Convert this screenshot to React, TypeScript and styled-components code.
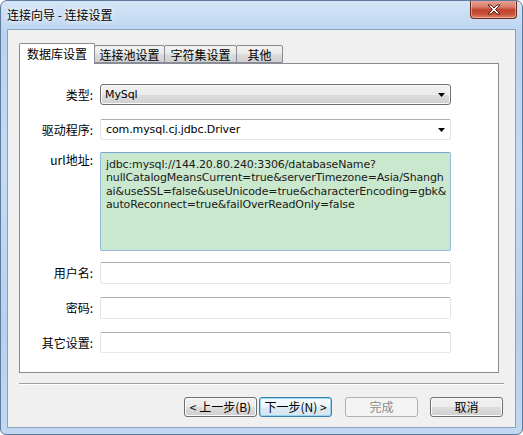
import styled, { createGlobalStyle } from 'styled-components';

const GlobalStyle = createGlobalStyle`
	html, body {
		margin: 0;
		padding: 0;
		background: #ffffff;
	}
	body {
		font-family: "Noto Sans CJK SC", "DejaVu Sans", sans-serif;
		font-size: 12px;
		color: #000;
	}
`

const CJK = `"Noto Sans CJK SC", "DejaVu Sans", sans-serif`
const LATIN = `"DejaVu Sans", "Noto Sans CJK SC", sans-serif`

const urlLines = [
	'jdbc:mysql://144.20.80.240:3306/databaseName?',
	'nullCatalogMeansCurrent=true&serverTimezone=Asia/Shangh',
	'ai&useSSL=false&useUnicode=true&characterEncoding=gbk&',
	'autoReconnect=true&failOverReadOnly=false',
]

const tabs = [
	{ label: '数据库设置', width: 76, active: true },
	{ label: '连接池设置', width: 71, active: false },
	{ label: '字符集设置', width: 73, active: false },
	{ label: '其他', width: 47, active: false },
]

const Arrow = () => (
	<svg width="7" height="4" viewBox="0 0 7 4">
		<path d="M0 0 H7 L3.5 4 Z" fill="#000" />
	</svg>
)

const CloseGlyph = () => (
	<svg width="14" height="11" viewBox="0 0 14 11">
		<path
			d="M1 1 L4 1 L7 4 L10 1 L13 1 L8.5 5.5 L13 10 L10 10 L7 7 L4 10 L1 10 L5.5 5.5 Z"
			fill="#ffffff"
			stroke="#5a1f17"
			strokeWidth="1"
			strokeLinejoin="round"
		/>
	</svg>
)

const App = () => {
	return (
		<>
			<GlobalStyle />
			<Window>
				<TitleBar>
					<Title>连接向导 - 连接设置</Title>
					<CloseButton>
						<CloseGlyph />
					</CloseButton>
				</TitleBar>
				<Client>
					<TabStrip>
						{tabs.map((t) => (
							<Tab key={t.label} $active={t.active} $width={t.width}>
								{t.label}
							</Tab>
						))}
					</TabStrip>
					<Panel>
						<Form>
							<Row $top={20}>
								<Label>类型:</Label>
								<SelectBox>
									<span>MySql</span>
									<Arrow />
								</SelectBox>
							</Row>
							<Row $top={14}>
								<Label>驱动程序:</Label>
								<Combo>
									<span>com.mysql.cj.jdbc.Driver</span>
									<Arrow />
								</Combo>
							</Row>
							<Row $top={12} $alignTop>
								<Label>url地址:</Label>
								<UrlArea>
									{urlLines.map((l) => (
										<UrlLine key={l}>{l}</UrlLine>
									))}
								</UrlArea>
							</Row>
							<Row $top={11}>
								<Label>用户名:</Label>
								<TextInput $height={22} />
							</Row>
							<Row $top={13}>
								<Label>密码:</Label>
								<TextInput $height={22} />
							</Row>
							<Row $top={13}>
								<Label>其它设置:</Label>
								<TextInput $height={21} />
							</Row>
						</Form>
					</Panel>
					<Separator />
					<ButtonBar>
						<Button>&lt; 上一步(B)</Button>
						<Button $default $gap={2}>下一步(N) &gt;</Button>
						<Button $disabled $gap={13}>完成</Button>
						<Button $gap={12}>取消</Button>
					</ButtonBar>
				</Client>
			</Window>
		</>
	)
}

const Window = styled.div`
	width: 523px;
	height: 435px;
	box-sizing: border-box;
	display: flex;
	flex-direction: column;
	padding: 0 6px 6px;
	border: 1px solid #5d7a9c;
	border-radius: 7px 7px 6px 6px;
	background: linear-gradient(180deg, #d4e5f7 0%, #b9d3f0 8%, #c6dbf3 40%, #b7d0ee 75%, #c2d8f1 100%);
	overflow: hidden;
`

const TitleBar = styled.div`
	height: 28px;
	display: flex;
	justify-content: space-between;
	align-items: flex-start;
`

const Title = styled.div`
	margin-top: 6px;
	font-family: ${CJK};
	font-size: 12px;
	line-height: 16px;
	color: #000;
	text-shadow: 0 0 6px #ffffff, 0 0 3px #ffffff;
`

const CloseButton = styled.div`
	width: 47px;
	height: 19px;
	margin-top: -1px;
	margin-right: -1px;
	box-sizing: border-box;
	border: 1px solid #6b2a20;
	border-top: none;
	border-radius: 0 0 4px 4px;
	background: linear-gradient(180deg, #e9a99c 0%, #d77b69 40%, #c0412b 55%, #c9533b 80%, #dd8a6a 100%);
	box-shadow: inset 0 0 0 1px rgba(255, 210, 200, 0.5);
	display: flex;
	align-items: center;
	justify-content: center;
`

const Client = styled.div`
	flex: 1;
	display: flex;
	flex-direction: column;
	background: #f0f0f0;
	border: 1px solid #8aa2c0;
	padding: 13px 11px 0 11px;
`

const TabStrip = styled.div`
	display: flex;
	align-items: flex-end;
	height: 20px;
	position: relative;
	z-index: 1;
`

const Tab = styled.div<{ $active: boolean; $width: number }>`
	width: ${(p) => p.$width}px;
	height: ${(p) => (p.$active ? 21 : 18)}px;
	box-sizing: border-box;
	margin-left: ${(p) => (p.$active ? 0 : -1)}px;
	margin-bottom: ${(p) => (p.$active ? -1 : 0)}px;
	border: 1px solid #898c95;
	border-bottom: ${(p) => (p.$active ? 'none' : '1px solid #898c95')};
	border-radius: 2px 2px 0 0;
	background: ${(p) =>
		p.$active ? '#ffffff' : 'linear-gradient(180deg, #f2f2f2 0%, #ebebeb 50%, #dddddd 51%, #cfcfcf 100%)'};
	font-family: ${CJK};
	font-size: 12px;
	line-height: 15px;
	text-align: center;
	padding-top: ${(p) => (p.$active ? 2 : 1)}px;
	white-space: nowrap;
`

const Panel = styled.div`
	width: 480px;
	height: 310px;
	box-sizing: border-box;
	border: 1px solid #898c95;
	background: #ffffff;
`

const Form = styled.div`
	display: flex;
	flex-direction: column;
`

const Row = styled.div<{ $top: number; $alignTop?: boolean }>`
	display: grid;
	grid-template-columns: 73px 351px;
	column-gap: 7px;
	align-items: ${(p) => (p.$alignTop ? 'start' : 'center')};
	margin-top: ${(p) => p.$top}px;
`

const Label = styled.div`
	font-family: ${CJK};
	font-size: 12px;
	line-height: 16px;
	text-align: right;
	white-space: nowrap;
`

const SelectBox = styled.div`
	height: 21px;
	box-sizing: border-box;
	display: flex;
	align-items: center;
	justify-content: space-between;
	padding: 0 5px 0 4px;
	border: 1px solid #707070;
	border-radius: 3px;
	background: linear-gradient(180deg, #f2f2f2 0%, #ebebeb 50%, #dddddd 51%, #cfcfcf 100%);
	box-shadow: inset 0 0 0 1px #fcfcfc;
	font-family: ${LATIN};
	font-size: 11px;
	letter-spacing: -0.1px;
	color: #000;
`

const Combo = styled.div`
	height: 21px;
	box-sizing: border-box;
	display: flex;
	align-items: center;
	justify-content: space-between;
	padding: 0 5px 0 5px;
	border: 1px solid #e2e3ea;
	border-top-color: #abadb3;
	border-bottom-color: #e3e9ef;
	border-radius: 2px;
	background: #ffffff;
	font-family: ${LATIN};
	font-size: 11px;
	letter-spacing: -0.1px;
	color: #000;
`

const UrlArea = styled.div`
	height: 99px;
	box-sizing: border-box;
	padding: 5px 5px 0 5px;
	border: 1px solid #93b8df;
	border-top-color: #7aa5d6;
	border-radius: 2px;
	background: #cae8cd;
	font-family: ${LATIN};
	font-size: 11px;
	line-height: 13.33px;
	letter-spacing: -0.14px;
	color: #1a1a1a;
	overflow: hidden;
`

const UrlLine = styled.div`
	white-space: nowrap;
`

const TextInput = styled.div<{ $height: number }>`
	height: ${(p) => p.$height}px;
	box-sizing: border-box;
	border: 1px solid #e2e3ea;
	border-top-color: #abadb3;
	border-bottom-color: #e3e9ef;
	border-radius: 2px;
	background: #ffffff;
`

const Separator = styled.div`
	margin-top: 10px;
	border-top: 1px solid #a0a0a0;
	border-bottom: 1px solid #ffffff;
`

const ButtonBar = styled.div`
	display: flex;
	justify-content: flex-end;
	margin-top: 12px;
	padding-right: 1px;
`

const Button = styled.div<{ $default?: boolean; $disabled?: boolean; $gap?: number }>`
	width: 73px;
	height: 20px;
	box-sizing: border-box;
	margin-left: ${(p) => p.$gap ?? 0}px;
	display: flex;
	align-items: center;
	justify-content: center;
	border-radius: 3px;
	font-family: ${CJK};
	font-size: 12px;
	line-height: 16px;
	white-space: nowrap;
	border: 1px solid ${(p) => (p.$disabled ? '#adb2b5' : p.$default ? '#3c7fb1' : '#707070')};
	color: ${(p) => (p.$disabled ? '#8a8a8a' : '#000')};
	background: ${(p) =>
		p.$disabled
			? '#f4f4f4'
			: p.$default
				? 'linear-gradient(180deg, #f6fafd 0%, #eef5fa 50%, #e0ebf3 51%, #d5e4ef 100%)'
				: 'linear-gradient(180deg, #f2f2f2 0%, #ebebeb 50%, #dddddd 51%, #cfcfcf 100%)'};
	box-shadow: ${(p) =>
		p.$disabled ? 'none' : p.$default ? 'inset 0 0 0 1px #97d5f2' : 'inset 0 0 0 1px #fcfcfc'};
`

export default App
